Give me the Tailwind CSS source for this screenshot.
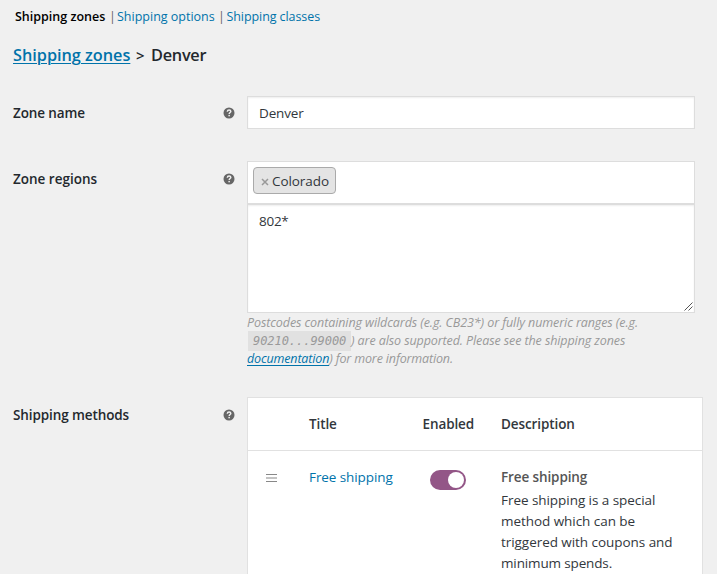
<!DOCTYPE html>
<html lang="en">
<head>
<meta charset="utf-8">
<title>Shipping zones</title>
<script src="https://cdn.jsdelivr.net/npm/@tailwindcss/browser@4"></script>
</head>
<body class="h-[574px] w-[717px] overflow-hidden bg-[#f0f0f0] font-['Open_Sans',sans-serif] text-[13.5px] text-[#32373c]">
<svg class="hidden">
  <symbol id="help" viewBox="0 0 12 12"><circle cx="6" cy="6" r="5.5" fill="#666"/><path d="M4.300 4.700C4.400 3.500 5.100 3.100 6.100 3.100c1.100 0 1.700.5 1.700 1.300C7.800 5.500 6.200 5.500 6.200 6.900" fill="none" stroke="#f0f0f0" stroke-width="1.500"/><rect x="5.400" y="7.900" width="1.500" height="1.400" fill="#f0f0f0"/></symbol>
</svg>
<nav class="flex h-[34px] items-center pl-[15px] text-[12.5px] text-[#0073aa]">
  <a class="w-[94px] font-semibold text-black">Shipping zones</a>
  <span class="w-[8px] text-[#666]">|</span>
  <a class="w-[101px]">Shipping options</a>
  <span class="w-[8.5px] text-[#666]">|</span>
  <a class="tracking-[-0.080px]">Shipping classes</a>
</nav>
<h2 class="flex h-[42px] items-center pl-[13px] text-[16.3px] font-semibold text-[#23282d]">
  <a class="w-[123px] tracking-[-0.02px] text-[#0073aa] underline decoration-1 underline-offset-2">Shipping zones</a>
  <span class="w-[15px] text-[15px]">&gt;</span>
  <span class="tracking-[-0.25px]">Denver</span>
</h2>

<div class="mt-5 flex h-[33px] pl-[13px]">
  <div class="flex h-[34px] w-[222px] items-center justify-between font-semibold text-[#23282d]"><span class="pt-px tracking-[-0.1px]">Zone name</span><svg class="size-3"><use href="#help"/></svg></div>
  <div class="ml-[12px] flex w-[448px] items-center border border-[#ddd] bg-white pt-[2px] pl-[11px] tracking-[-0.15px] shadow-[inset_0_1px_2px_rgba(0,0,0,0.07)]">Denver</div>
</div>

<div class="mt-8 flex h-[236px] pl-[13px]">
  <div class="flex h-9 w-[222px] items-center justify-between font-semibold text-[#23282d]"><span>Zone regions</span><svg class="size-3"><use href="#help"/></svg></div>
  <div class="ml-[12px] w-[448px]">
    <div class="h-[43px] border border-[#ddd] bg-white pt-[5px] pl-[5px]">
      <div class="flex h-[27px] w-[83px] items-center rounded-[4px] border border-[#aaa] bg-[#e4e4e4] pl-[7px]">
        <svg class="mt-[3px] mr-[3px] size-[8px]" viewBox="0 0 8 8"><path d="M1 1l6 6M7 1l-6 6" stroke="#999" stroke-width="1.5"/></svg>
        <span class="pt-[2px] tracking-[-0.07px]">Colorado</span>
      </div>
    </div>
    <div class="relative h-[109px] border border-[#ddd] bg-white pt-[6px] pl-[11px] leading-5 tracking-[-0.27px] shadow-[inset_0_1px_2px_rgba(0,0,0,0.07)]">802*
      <svg class="absolute right-[1px] bottom-[1px] size-[9px]" viewBox="0 0 9 9"><path d="M0.500 8.500l8-8M4.500 8.500l4-4" stroke="#555" stroke-width="1"/></svg>
    </div>
    <div class="whitespace-nowrap pt-[1px] text-[12.5px] leading-[18px] text-[#999] italic">
      <div class="tracking-[-0.087px]">Postcodes containing wildcards (e.g. CB23*) or fully numeric ranges (e.g.</div>
      <div class="flex h-[18px] items-center"><code class="ml-[1px] flex h-[20px] w-[103px] shrink-0 items-center bg-[#e1e1e1] pl-[5px] font-['DejaVu_Sans_Mono',monospace] text-[12px] tracking-[-0.05px]">90210...99000</code><span class="tracking-[-0.095px]">) are also supported. Please see the shipping zones</span></div>
      <div class="tracking-[-0.15px]"><a class="text-[#0073aa] underline decoration-1 underline-offset-2">documentation</a>) for more information.</div>
    </div>
  </div>
</div>

<div class="flex h-[177px] overflow-hidden pl-[13px]">
  <div class="flex h-[35px] w-[222px] items-center justify-between font-semibold text-[#23282d]"><span class="pt-px tracking-[-0.1px]">Shipping methods</span><svg class="size-3"><use href="#help"/></svg></div>
  <div class="ml-[12px] w-[456px] border border-b-0 border-[#e1e1e1] bg-white">
    <div class="grid h-[53px] grid-cols-[61px_113.5px_78.5px_1fr] items-center border-b border-[#e1e1e1] font-semibold">
      <span></span><span class="tracking-[-0.1px]">Title</span><span class="tracking-[-0.1px]">Enabled</span><span class="tracking-[-0.1px]">Description</span>
    </div>
    <div class="grid grid-cols-[61px_114px_78px_1fr] pt-[16px] leading-[21px]">
      <svg class="mt-[7px] ml-[18px] h-[8px] w-[11px]" viewBox="0 0 11 8"><path d="M0 .5h11M0 4h11M0 7.500h11" stroke="#888" stroke-width="1.100"/></svg>
      <a class="tracking-[-0.09px] text-[#0073aa]">Free shipping</a>
      <div class="mt-[3px] ml-[7px] flex h-5 w-9 justify-end rounded-full bg-[#935687] p-[2px]"><i class="size-4 rounded-full bg-white"></i></div>
      <div class="whitespace-nowrap">
        <strong class="mb-[2px] block font-semibold tracking-[-0.11px] text-[#555]">Free shipping</strong>
        <p class="tracking-[-0.05px]">Free shipping is a special<br>method which can be<br>triggered with coupons and<br><span class="tracking-[-0.14px]">minimum spends.</span></p>
      </div>
    </div>
  </div>
</div>
</body>
</html>
